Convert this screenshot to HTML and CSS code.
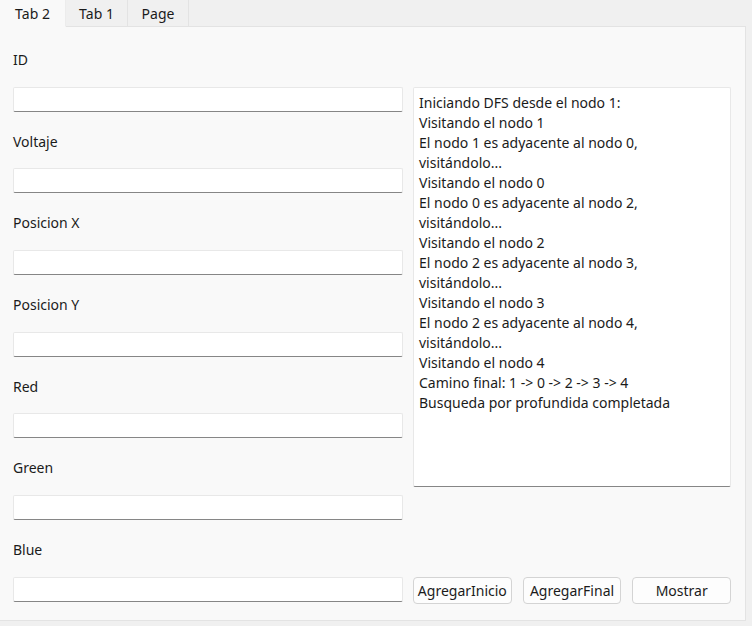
FILE: index.html
```html
<!DOCTYPE html>
<html lang="es">
<head>
<meta charset="utf-8">
<title>Tabs</title>
<link rel="stylesheet" href="styles.css">
</head>
<body>
<div class="tabs">
  <div class="tab tab-active">Tab 2</div>
  <div class="tab">Tab 1</div>
  <div class="tab">Page</div>
  <div class="tab-fill"></div>
</div>
<div class="panel">
  <div class="fields">
    <div class="field"><div class="label">ID</div><div class="input"></div></div>
    <div class="field"><div class="label">Voltaje</div><div class="input"></div></div>
    <div class="field"><div class="label">Posicion X</div><div class="input"></div></div>
    <div class="field"><div class="label">Posicion Y</div><div class="input"></div></div>
    <div class="field"><div class="label">Red</div><div class="input"></div></div>
    <div class="field"><div class="label">Green</div><div class="input"></div></div>
    <div class="field"><div class="label">Blue</div><div class="input"></div></div>
  </div>
  <div class="side">
    <div class="output">Iniciando DFS desde el nodo 1:
Visitando el nodo 1
El nodo 1 es adyacente al nodo 0,
visitándolo...
Visitando el nodo 0
El nodo 0 es adyacente al nodo 2,
visitándolo...
Visitando el nodo 2
El nodo 2 es adyacente al nodo 3,
visitándolo...
Visitando el nodo 3
El nodo 2 es adyacente al nodo 4,
visitándolo...
Visitando el nodo 4
Camino final: 1 -&gt; 0 -&gt; 2 -&gt; 3 -&gt; 4
Busqueda por profundida completada</div>
    <div class="buttons">
      <button class="btn">AgregarInicio</button>
      <button class="btn">AgregarFinal</button>
      <button class="btn">Mostrar</button>
    </div>
  </div>
</div>
</body>
</html>
```
FILE: styles.css
```css
html, body {
  margin: 0;
  padding: 0;
}
body {
  background: #f0f0f0;
  width: 752px;
  height: 626px;
  overflow: hidden;
  font-family: "Noto Sans", "Open Sans", sans-serif;
  font-size: 14px;
  color: #1b1b1b;
}
.tabs {
  display: flex;
  height: 26px;
  width: 746px;
}
.tab {
  box-sizing: border-box;
  height: 27px;
  display: flex;
  align-items: center;
  justify-content: center;
  border-right: 1px solid #e3e3e3;
  border-bottom: 1px solid #e3e3e3;
  background: #f0f0f0;
}
.tab:nth-child(1) { width: 66px; }
.tab:nth-child(2) { width: 62px; }
.tab:nth-child(3) { width: 61px; }
.tab-active {
  background: #f9f9f9;
  border-bottom-color: #f9f9f9;
  border-right-color: #ececec;
  position: relative;
  z-index: 1;
}
.tab-fill {
  flex: 1;
  height: 27px;
  box-sizing: border-box;
  border-bottom: 1px solid #e3e3e3;
}
.panel {
  box-sizing: border-box;
  width: 746px;
  height: 595px;
  background: #f9f9f9;
  border-right: 1px solid #e3e3e3;
  border-bottom: 1px solid #e3e3e3;
  padding: 24px 0 0 13px;
  display: flex;
  gap: 10px;
}
.fields {
  width: 390px;
  display: flex;
  flex-direction: column;
  gap: 20px;
}
.field {
  display: flex;
  flex-direction: column;
  gap: 16.67px;
}
.label {
  line-height: 20px;
  height: 20px;
}
.input {
  box-sizing: border-box;
  height: 25px;
  background: #ffffff;
  border: 1px solid #e8e8e8;
  border-bottom: 1px solid #868686;
  border-radius: 2px;
}
.side {
  width: 318px;
  display: flex;
  flex-direction: column;
  justify-content: space-between;
  padding-top: 37px;
  padding-bottom: 16px;
}
.output {
  box-sizing: border-box;
  height: 400px;
  background: #ffffff;
  border: 1px solid #e8e8e8;
  border-bottom: 1px solid #868686;
  border-radius: 2px;
  padding: 5px 5px;
  line-height: 20px;
  white-space: pre-wrap;
}
.buttons {
  display: flex;
  gap: 11px;
}
.btn {
  flex: 1;
  height: 27px;
  font: inherit;
  color: #1b1b1b;
  background: #fdfdfd;
  border: 1px solid #d4d4d4;
  border-radius: 4px;
  padding: 0;
}
```
